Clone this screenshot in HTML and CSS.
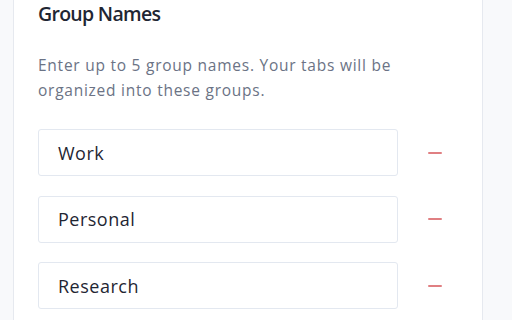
FILE: index.html
```html
<!DOCTYPE html>
<html>
<head>
<meta charset="utf-8">
<link rel="stylesheet" href="styles.css">
</head>
<body>
<div class="page">
  <section class="card">
    <h2 class="title">Group Names</h2>
    <p class="desc">Enter up to 5 group names. Your tabs will be organized into these groups.</p>
    <div class="rows">
      <div class="row">
        <div class="field">Work</div>
        <button class="remove" aria-label="Remove"><span class="minus"></span></button>
      </div>
      <div class="row">
        <div class="field">Personal</div>
        <button class="remove" aria-label="Remove"><span class="minus"></span></button>
      </div>
      <div class="row">
        <div class="field">Research</div>
        <button class="remove" aria-label="Remove"><span class="minus"></span></button>
      </div>
    </div>
  </section>
</div>
</body>
</html>
```
FILE: styles.css
```css
html, body {
  margin: 0;
  padding: 0;
  background: #f8f9fb;
  font-family: "Open Sans", "Noto Sans", "Liberation Sans", sans-serif;
}
.page {
  padding-left: 13px;
  height: 320px;
  overflow: hidden;
}
.card {
  width: 470px;
  height: 340px;
  background: #ffffff;
  border: 1px solid #e6e9ef;
  border-top: none;
  padding: 0 0 0 24px;
  box-sizing: border-box;
}
.title {
  margin: 0;
  padding-top: 1px;
  font-size: 19.5px;
  font-weight: 600;
  line-height: 26px;
  letter-spacing: -0.7px;
  color: #1f2633;
}
.desc {
  margin: 26px 0 0 0;
  width: 390px;
  font-size: 15.5px;
  line-height: 25px;
  letter-spacing: 0.75px;
  color: #6b7385;
}
.rows {
  margin-top: 26px;
  display: flex;
  flex-direction: column;
  gap: 19.5px;
}
.row {
  display: flex;
  align-items: center;
  gap: 30px;
}
.field {
  width: 360px;
  height: 47px;
  box-sizing: border-box;
  border: 1px solid #e3e8f0;
  border-radius: 3px;
  padding-left: 19px;
  display: flex;
  align-items: center;
  font-size: 18px;
  letter-spacing: 0.5px;
  color: #1f2633;
}
.remove {
  border: none;
  background: none;
  padding: 0;
  width: 14px;
  height: 14px;
  display: flex;
  align-items: center;
}
.minus {
  display: block;
  width: 14px;
  height: 2px;
  border-radius: 1px;
  background: #e07f82;
}
```
